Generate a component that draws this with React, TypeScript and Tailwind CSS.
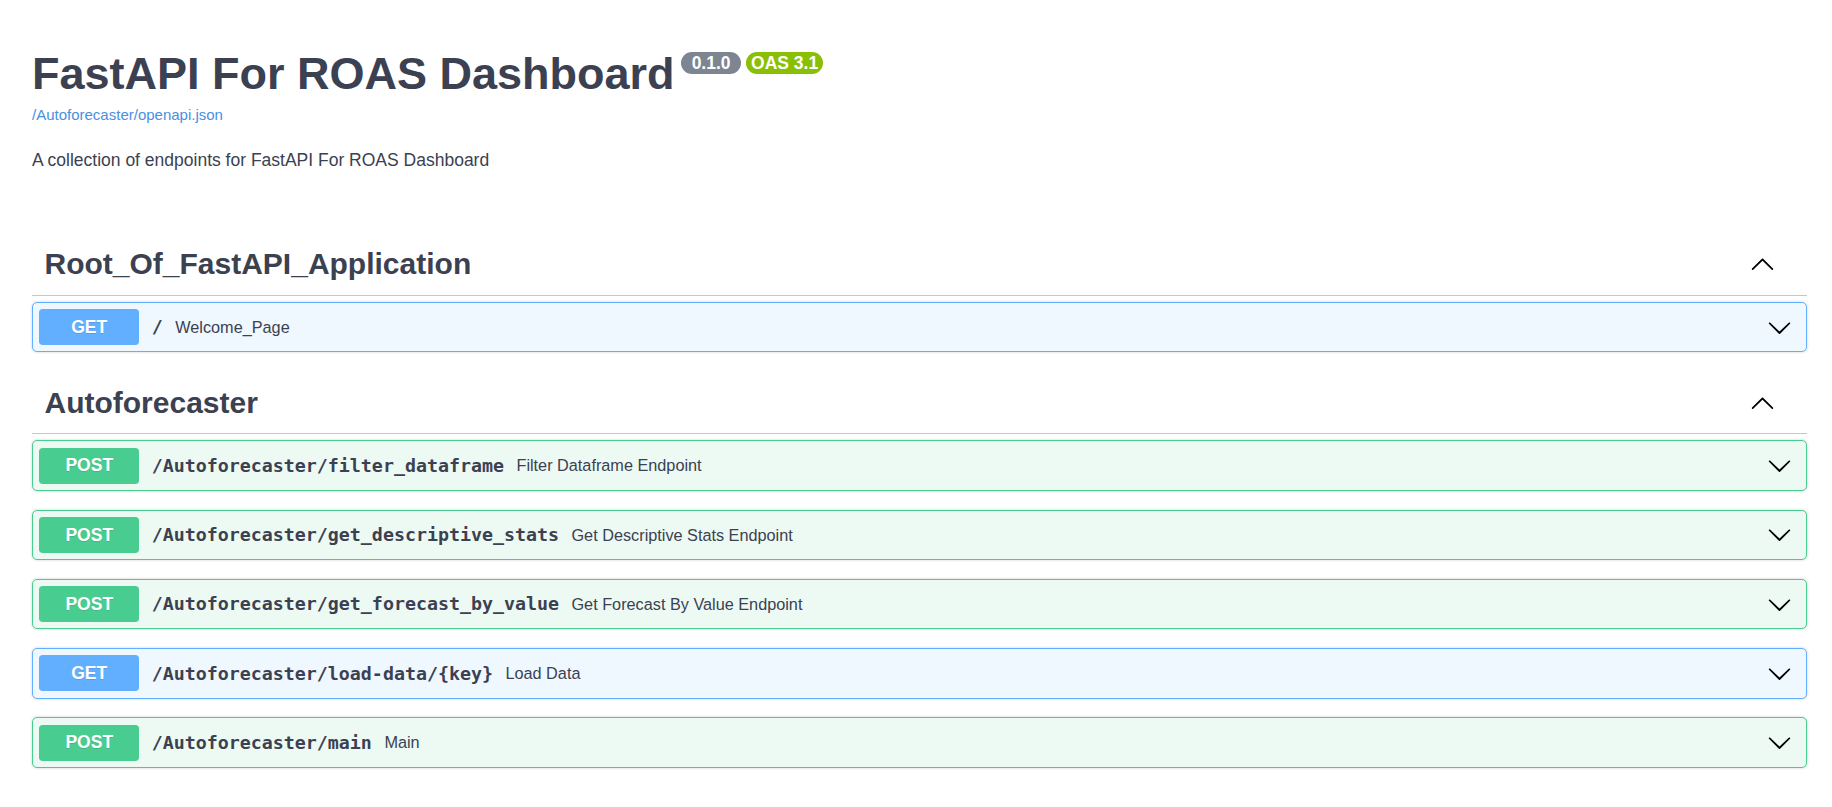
import React from "react";

type Op = { method: "GET" | "POST"; path: string; summary: string };

const sections: { name: string; ops: Op[] }[] = [
  {
    name: "Root_Of_FastAPI_Application",
    ops: [{ method: "GET", path: "/", summary: "Welcome_Page" }],
  },
  {
    name: "Autoforecaster",
    ops: [
      { method: "POST", path: "/Autoforecaster/filter_dataframe", summary: "Filter Dataframe Endpoint" },
      { method: "POST", path: "/Autoforecaster/get_descriptive_stats", summary: "Get Descriptive Stats Endpoint" },
      { method: "POST", path: "/Autoforecaster/get_forecast_by_value", summary: "Get Forecast By Value Endpoint" },
      { method: "GET", path: "/Autoforecaster/load-data/{key}", summary: "Load Data" },
      { method: "POST", path: "/Autoforecaster/main", summary: "Main" },
    ],
  },
];

function ArrowDown() {
  return (
    <svg viewBox="0 0 20 20" className="w-[25px] h-[25px] shrink-0 fill-black">
      <path d="M17.418 6.109c.272-.268.709-.268.979 0s.271.701 0 .969l-7.908 7.83c-.27.268-.707.268-.979 0l-7.908-7.83c-.27-.268-.27-.701 0-.969.271-.268.709-.268.979 0L10 13.25l7.418-7.141z" />
    </svg>
  );
}

function ArrowUp() {
  return (
    <svg viewBox="0 0 20 20" className="w-[25px] h-[25px] shrink-0 fill-black">
      <path d="M17.418 14.908c.272.268.709.268.979 0s.271-.701 0-.969l-7.908-7.83c-.27-.268-.707-.268-.979 0l-7.908 7.83c-.27.268-.27.701 0 .969.271.268.709.268.979 0L10 7.767l7.418 7.141z" />
    </svg>
  );
}

function OpBlock({ op }: { op: Op }) {
  const get = op.method === "GET";
  return (
    <div
      className={`mb-[18.75px] rounded-[5px] border shadow-[0_0_3px_rgba(0,0,0,0.19)] ${
        get ? "border-[#61affe] bg-[#eff7ff]" : "border-[#49cc90] bg-[#edfaf4]"
      }`}
    >
      <div className="flex items-center p-[6.25px]">
        <span
          className={`w-[100px] h-[36px] shrink-0 rounded-[3.75px] flex items-center justify-center text-white font-bold text-[17.5px] [text-shadow:0_1px_0_rgba(0,0,0,0.1)] ${
            get ? "bg-[#61affe]" : "bg-[#49cc90]"
          }`}
        >
          {op.method}
        </span>
        <span className="px-[12.5px] font-['DejaVu_Sans_Mono',monospace] font-bold text-[18.3px] text-[#3b4151]">
          {op.path}
        </span>
        <span className="flex-1 text-[16.25px] text-[#3b4151]">{op.summary}</span>
        <span className="mr-[8px]">
          <ArrowDown />
        </span>
      </div>
    </div>
  );
}

export default function App() {
  return (
    <div className="min-h-screen bg-white font-['Liberation_Sans',Arial,sans-serif] text-[#3b4151] pl-[32px] pr-[25px] pt-[48px] pb-[20px]">
      {/* info */}
      <div className="flex items-start">
        <h2 className="text-[45px] leading-[52px] font-bold">FastAPI For ROAS Dashboard</h2>
        <div className="ml-[6.5px] mt-[4px] flex gap-[5px]">
          <span className="w-[60px] h-[22px] rounded-full bg-[#7d8492] text-white font-bold text-[17.5px] leading-[22px] text-center">
            0.1.0
          </span>
          <span className="w-[77px] h-[22px] rounded-full bg-[#89bf04] text-white font-bold text-[17.5px] leading-[22px] text-center">
            OAS 3.1
          </span>
        </div>
      </div>
      <a className="block mt-[6px] text-[15px] leading-[17px] text-[#4990e2]">/Autoforecaster/openapi.json</a>
      <p className="mt-[27px] text-[17.5px] leading-[21px]">A collection of endpoints for FastAPI For ROAS Dashboard</p>

      <div className="mt-[61.5px]">
        {sections.map((s) => (
          <section key={s.name}>
            <div className="h-[63px] flex items-center border-b border-[#3b4151]/30 pl-[12.5px] pr-[32px]">
              <h3 className="flex-1 text-[30px] font-bold">{s.name}</h3>
              <ArrowUp />
            </div>
            <div className="pt-[6.25px]">
              {s.ops.map((op) => (
                <OpBlock key={op.path} op={op} />
              ))}
            </div>
          </section>
        ))}
      </div>
    </div>
  );
}
